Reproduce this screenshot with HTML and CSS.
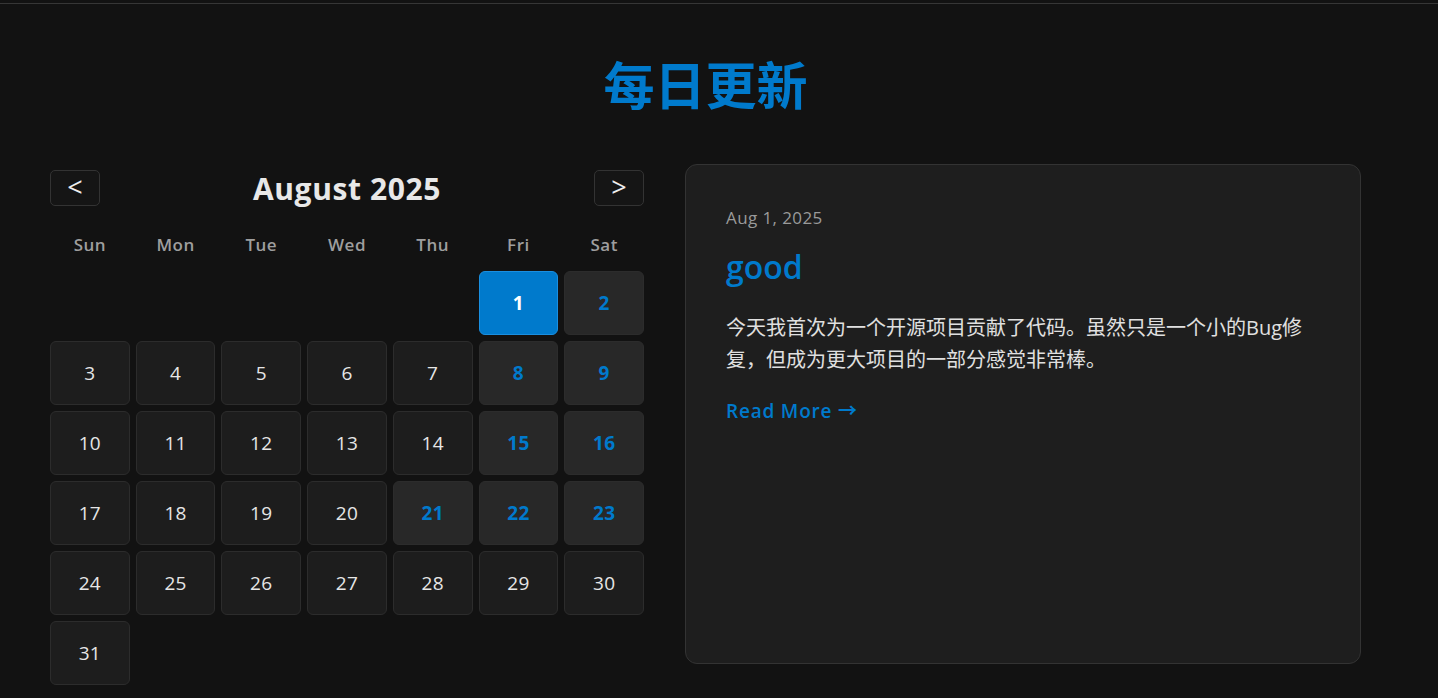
FILE: index.html
```html
<!DOCTYPE html>
<html lang="zh-CN">
<head>
<meta charset="utf-8">
<title>每日更新</title>
<link rel="stylesheet" href="styles.css">
</head>
<body>
<div class="topbar"></div>
<main class="container">
  <h1 class="page-title">每日更新</h1>
  <div class="layout">
    <section class="calendar">
      <div class="cal-header">
        <button class="nav-btn">&lt;</button>
        <h2 class="month">August 2025</h2>
        <button class="nav-btn">&gt;</button>
      </div>
      <div class="weekdays">
        <div>Sun</div><div>Mon</div><div>Tue</div><div>Wed</div><div>Thu</div><div>Fri</div><div>Sat</div>
      </div>
      <div class="days">
        <div class="empty"></div><div class="empty"></div><div class="empty"></div><div class="empty"></div><div class="empty"></div>
        <div class="day selected">1</div>
        <div class="day has">2</div>
        <div class="day">3</div><div class="day">4</div><div class="day">5</div><div class="day">6</div><div class="day">7</div>
        <div class="day has">8</div><div class="day has">9</div>
        <div class="day">10</div><div class="day">11</div><div class="day">12</div><div class="day">13</div><div class="day">14</div>
        <div class="day has">15</div><div class="day has">16</div>
        <div class="day">17</div><div class="day">18</div><div class="day">19</div><div class="day">20</div>
        <div class="day has">21</div><div class="day has">22</div><div class="day has">23</div>
        <div class="day">24</div><div class="day">25</div><div class="day">26</div><div class="day">27</div><div class="day">28</div><div class="day">29</div><div class="day">30</div>
        <div class="day">31</div>
      </div>
    </section>
    <article class="card">
      <div class="date">Aug 1, 2025</div>
      <h3 class="post-title">good</h3>
      <p class="excerpt">今天我首次为一个开源项目贡献了代码。虽然只是一个小的Bug修复，但成为更大项目的一部分感觉非常棒。</p>
      <a class="read-more" href="#">Read More →</a>
    </article>
  </div>
</main>
</body>
</html>
```
FILE: styles.css
```css
* { box-sizing: border-box; }
html, body { margin: 0; padding: 0; background: #121212; }
body {
  font-family: "Open Sans", "Noto Sans CJK SC", sans-serif;
  color: #e6e6e6;
}
.topbar {
  height: 4px;
  border-bottom: 1px solid #363636;
}
.container {
  width: 1311px;
  margin-left: 50px;
}
.page-title {
  margin: 48px 0 0;
  height: 112px;
  font-size: 51px;
  line-height: 62px;
  font-weight: 700;
  text-align: center;
  color: #007acc;
  font-family: "Noto Sans CJK SC", sans-serif;
}
.layout {
  display: flex;
  align-items: flex-start;
  gap: 41px;
}
.calendar { width: 594px; }
.cal-header {
  height: 48px;
  display: flex;
  align-items: center;
  justify-content: space-between;
  margin-bottom: 20px;
}
.nav-btn {
  width: 50px;
  height: 36px;
  background: #151515;
  border: 1px solid #333;
  border-radius: 5px;
  color: #eee;
  font-family: "Open Sans", sans-serif;
  font-size: 27px;
  font-weight: 500;
  line-height: 1;
  padding: 0 0 4px;
}
.month {
  margin: 0;
  font-size: 30px;
  letter-spacing: 0.6px;
  font-weight: 700;
  color: #e8e8e8;
}
.weekdays {
  display: grid;
  grid-template-columns: repeat(7, 1fr);
  gap: 6px;
  height: 26px;
  line-height: 26px;
  margin-bottom: 13px;
  text-align: center;
  font-size: 17px;
  letter-spacing: 0.5px;
  font-weight: 600;
  color: #9e9e9e;
}
.days {
  display: grid;
  grid-template-columns: repeat(7, 1fr);
  grid-auto-rows: 64px;
  gap: 6px;
}
.day {
  display: flex;
  align-items: center;
  justify-content: center;
  background: #1d1d1d;
  border: 1px solid #2c2c2c;
  border-radius: 6px;
  font-size: 19px;
  letter-spacing: 0.3px;
  color: #e6e6e6;
}
.day.has {
  background: #282828;
  color: #007acc;
  font-weight: 700;
}
.day.selected {
  background: #007acc;
  border-color: #1a8fe0;
  color: #fff;
  font-weight: 700;
}
.card {
  width: 676px;
  min-height: 500px;
  background: #1e1e1e;
  border: 1px solid #333;
  border-radius: 12px;
  padding: 40px;
}
.date {
  font-size: 17px;
  letter-spacing: 0.4px;
  line-height: 26px;
  color: #9a9a9a;
}
.post-title {
  margin: 17px 0 0;
  font-size: 32px;
  line-height: 38px;
  font-weight: 600;
  color: #007acc;
}
.excerpt {
  margin: 26px 0 0;
  font-size: 20px;
  line-height: 32px;
  color: #e0e0e0;
}
.read-more {
  display: inline-block;
  margin-top: 22px;
  font-size: 19px;
  letter-spacing: 0.8px;
  line-height: 27px;
  font-weight: 600;
  color: #007acc;
  text-decoration: none;
}
```
